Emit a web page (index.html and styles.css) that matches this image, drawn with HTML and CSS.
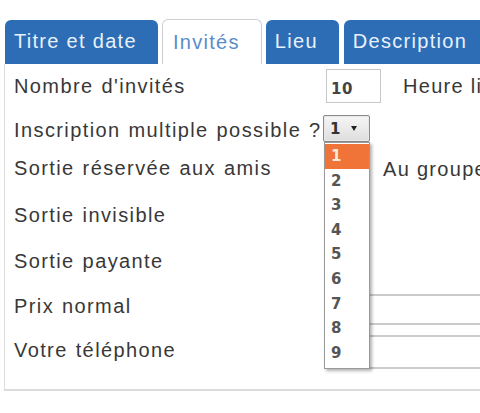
FILE: index.html
```html
<!DOCTYPE html>
<html lang="fr">
<head>
<meta charset="utf-8">
<title>Invités</title>
<link rel="stylesheet" href="styles.css">
</head>
<body>
<div class="tabs">
  <div class="tab tab-blue">Titre et date</div>
  <div class="tab tab-active">Invités</div>
  <div class="tab tab-blue">Lieu</div>
  <div class="tab tab-blue">Description</div>
</div>
<div class="panel">
  <div class="row r1">
    <div class="label">Nombre d'invités</div>
    <div class="field field-num">10</div>
    <div class="after">Heure li</div>
  </div>
  <div class="row r2">
    <div class="label">Inscription multiple possible ?</div>
    <div class="select">
      <span class="select-val">1</span><span class="select-arrow"></span>
      <ul class="dropdown">
        <li class="opt opt-on">1</li>
        <li class="opt">2</li>
        <li class="opt">3</li>
        <li class="opt">4</li>
        <li class="opt">5</li>
        <li class="opt">6</li>
        <li class="opt">7</li>
        <li class="opt">8</li>
        <li class="opt">9</li>
      </ul>
    </div>
  </div>
  <div class="row r3">
    <div class="label">Sortie réservée aux amis</div>
    <div class="after-far">Au groupe</div>
  </div>
  <div class="row r4">
    <div class="label">Sortie invisible</div>
  </div>
  <div class="row r5">
    <div class="label">Sortie payante</div>
  </div>
  <div class="row r6">
    <div class="label">Prix normal</div>
    <div class="field field-wide f6"></div>
  </div>
  <div class="row r7">
    <div class="label">Votre téléphone</div>
    <div class="field field-wide f7"></div>
  </div>
</div>
</body>
</html>
```
FILE: styles.css
```css
html, body {
  margin: 0;
  padding: 0;
  background: #fff;
  overflow: hidden;
  width: 480px;
  height: 413px;
}
body {
  font-family: "Liberation Sans", Arial, sans-serif;
  font-size: 20px;
  letter-spacing: 1.3px;
  color: #383838;
}
.tabs {
  display: flex;
  padding: 19px 0 0 5px;
  height: 64px;
  box-sizing: border-box;
  white-space: nowrap;
  align-items: flex-end;
  overflow: hidden;
}
.tab {
  height: 44px;
  line-height: 42px;
  padding: 0 21px 0 9px;
  border-radius: 6px 6px 0 0;
  box-sizing: border-box;
  margin-right: 4px;
  flex: none;
}
.tab-blue {
  background: #2d6db6;
  color: #e8f1fb;
}
.tab-active {
  background: #fff;
  color: #5b8cca;
  border: 1px solid #cfcfcf;
  border-bottom: none;
  height: 45px;
  line-height: 44px;
  padding: 0 21px 0 10px;
}
.tab:nth-child(3) {
  margin-right: 5px;
}
.panel {
  margin-left: 4px;
  border-left: 1px solid #dcdcdc;
  border-bottom: 2px solid #dcdcdc;
  height: 327px;
  padding: 5px 0 0 9px;
  box-sizing: border-box;
  position: relative;
}
.row {
  display: flex;
  align-items: center;
  height: 34px;
  white-space: nowrap;
}
.r2 { margin-top: 10px; }
.r3 { margin-top: 4px; }
.r4 { margin-top: 13px; }
.r5 { margin-top: 12px; }
.r6 { margin-top: 11px; }
.r7 { margin-top: 10px; }
.label {
  width: 311px;
  flex: none;
  line-height: 23px;
  letter-spacing: 1.4px;
  word-spacing: 1px;
}
.field {
  box-sizing: border-box;
  border: 1px solid #c8c8c8;
  background: #fff;
  flex: none;
}
.field-num {
  width: 55px;
  height: 34px;
  margin-left: 1px;
  font-size: 15px;
  letter-spacing: 0.5px;
  line-height: 34px;
  padding-left: 4px;
  padding-top: 2px;
  color: #444;
  font-weight: 600;
  font-family: "DejaVu Sans", sans-serif;
}
.after {
  margin-left: 22px;
}
.after-far {
  margin-left: 58px;
  margin-top: 2px;
}
.field-wide {
  width: 200px;
  margin-left: 0;
  border-color: #cbcbcb;
  border-width: 2px 1px;
}
.f6 {
  height: 31px;
  align-self: flex-start;
  margin-top: 5px;
}
.f7 {
  height: 34px;
  align-self: flex-start;
  margin-top: 2px;
}
.select {
  position: relative;
  width: 47px;
  height: 27px;
  box-sizing: border-box;
  border: 1px solid #8a8a8a;
  border-radius: 2px;
  background: linear-gradient(#f6f6f6, #dedede);
  margin-left: -2px;
  margin-top: -3px;
  flex: none;
  font-family: "DejaVu Sans", sans-serif;
  font-weight: bold;
  font-size: 15px;
  letter-spacing: 0;
  color: #333;
  box-shadow: inset 0 0 0 1px #e8e8e8;
}
.select-val {
  position: absolute;
  left: 6px;
  top: 4px;
  line-height: 18px;
}
.select-arrow {
  position: absolute;
  left: 27px;
  top: 10px;
  width: 0;
  height: 0;
  border-left: 3px solid transparent;
  border-right: 3px solid transparent;
  border-top: 5px solid #222;
}
.dropdown {
  position: absolute;
  left: 0;
  top: 26px;
  width: 46px;
  margin: 0;
  padding: 1px 0 3px;
  list-style: none;
  background: #fff;
  border: 1px solid #9a9a9a;
  box-sizing: border-box;
  box-shadow: 2px 2px 3px rgba(0, 0, 0, 0.3);
  z-index: 10;
}
.opt {
  height: 24.6px;
  line-height: 24.6px;
  padding-left: 6px;
  color: #555;
}
.opt-on {
  background: #f07338;
  color: #fde8dc;
}
```
